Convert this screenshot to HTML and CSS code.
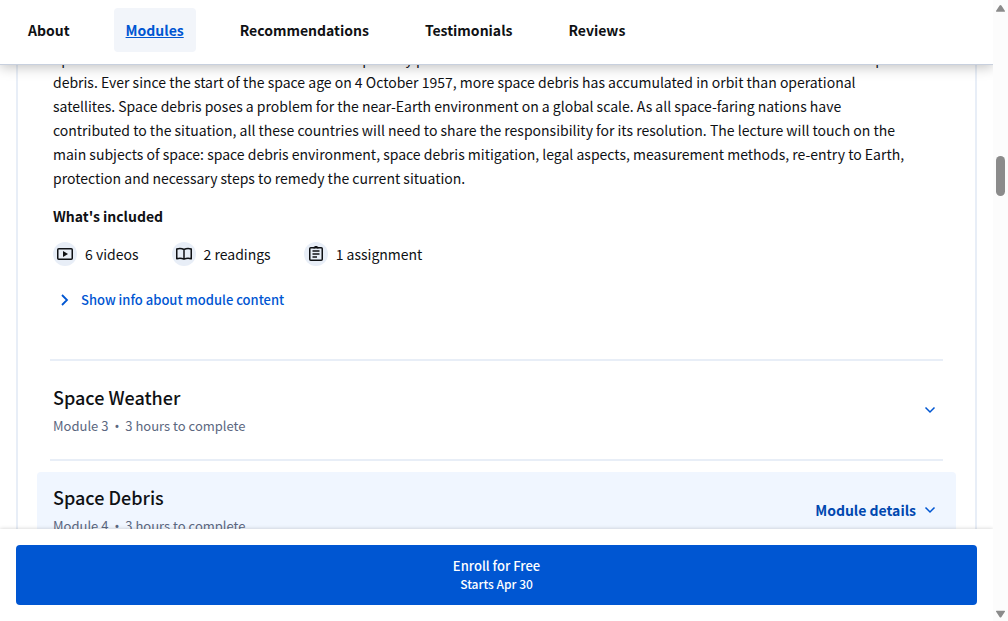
FILE: index.html
```html
<!DOCTYPE html>
<html lang="en">
<head>
<meta charset="utf-8">
<meta name="viewport" content="width=device-width, initial-scale=1">
<title>Space Debris – Modules</title>
<link rel="stylesheet" href="styles.css">
</head>
<body>
<div class="frame">
  <div class="page">
    <header class="topbar">
      <nav class="tabs" aria-label="Course sections">
        <a class="tab" href="#about">About</a>
        <a class="tab tab-active" href="#modules" aria-current="true">Modules</a>
        <a class="tab" href="#recommendations">Recommendations</a>
        <a class="tab" href="#testimonials">Testimonials</a>
        <a class="tab" href="#reviews">Reviews</a>
      </nav>
    </header>

    <main class="content" id="modules">
      <section class="card">
        <div class="module-body">
          <p class="summary">Space debris is a concern to all of the nations especially problems related to satellites and the future human use of near-Earth space debris. Ever since the start of the space age on 4 October 1957, more space debris has accumulated in orbit than operational satellites. Space debris poses a problem for the near-Earth environment on a global scale. As all space-faring nations have contributed to the situation, all these countries will need to share the responsibility for its resolution. The lecture will touch on the main subjects of space: space debris environment, space debris mitigation, legal aspects, measurement methods, re-entry to Earth, protection and necessary steps to remedy the current situation.</p>
          <h3 class="included-title">What's included</h3>
          <ul class="included">
            <li class="included-item">
              <span class="badge"><svg width="16" height="16" viewBox="0 0 16 16" aria-hidden="true"><rect x="0.75" y="2.75" width="14.5" height="10.5" rx="1" fill="none" stroke="currentColor" stroke-width="1.5"/><path d="M6 5v6l5-3z" fill="currentColor"/></svg></span>
              6 videos
            </li>
            <li class="included-item">
              <span class="badge"><svg width="16" height="16" viewBox="0 0 16 16" fill="none" stroke="currentColor" stroke-width="1.5" stroke-linejoin="round" aria-hidden="true"><path d="M8 3.5C6 2.400 3 2.200 0.750 3v9.800C3 12 6 12.200 8 13.200 10 12.200 13 12 15.250 12.800V3C13 2.200 10 2.400 8 3.500zM8 3.500v9.700"/></svg></span>
              2 readings
            </li>
            <li class="included-item">
              <span class="badge"><svg width="16" height="16" viewBox="0 0 16 16" fill="none" stroke="currentColor" stroke-width="1.500" aria-hidden="true"><rect x="1.750" y="1.750" width="12.500" height="12.500" rx="1"/><path d="M5.500 2L8 0.500l2.500 1.500M4.500 5h7M4.500 8h7M4.500 11h4.500"/></svg></span>
              1 assignment
            </li>
          </ul>
          <button class="show-info" type="button">
            <svg width="12" height="14" viewBox="0 0 12 14" fill="none" stroke="currentColor" stroke-width="1.800" aria-hidden="true"><path d="M3 2l5 5-5 5"/></svg>
            Show info about module content
          </button>
        </div>

        <hr class="divider">

        <div class="module">
          <div class="module-text">
            <h2 class="module-title">Space Weather</h2>
            <p class="module-meta"><span>Module 3</span><span class="dot">•</span><span>3 hours to complete</span></p>
          </div>
          <button class="toggle" type="button" aria-label="Show module details for Space Weather">
            <svg class="chevron" width="12" height="12" viewBox="0 0 12 12" fill="none" stroke="currentColor" stroke-width="1.500" aria-hidden="true"><path d="M1.500 3.500L6 8l4.500-4.500"/></svg>
          </button>
        </div>

        <hr class="divider">

        <div class="module module-hover">
          <div class="module-text">
            <h2 class="module-title">Space Debris</h2>
            <p class="module-meta"><span>Module 4</span><span class="dot">•</span><span>3 hours to complete</span></p>
          </div>
          <button class="toggle" type="button">
            Module details
            <svg class="chevron" width="12" height="12" viewBox="0 0 12 12" fill="none" stroke="currentColor" stroke-width="1.500" aria-hidden="true"><path d="M1.500 3.500L6 8l4.500-4.500"/></svg>
          </button>
        </div>
      </section>
    </main>

    <footer class="enroll-bar">
      <button class="enroll" type="button">
        <span class="enroll-title">Enroll for Free</span>
        <span class="enroll-date">Starts Apr 30</span>
      </button>
    </footer>
  </div>

  <div class="scrollbar" aria-hidden="true">
    <svg width="11" height="8" viewBox="0 0 11 8"><path d="M5.500 1Q6 1 6.400 1.600L10 7q.3.800-.6.800H1.600Q.7 7.800 1 7L4.600 1.600Q5 1 5.500 1z" fill="#8b8b8b"/></svg>
    <div class="track"><div class="thumb"></div></div>
    <svg width="11" height="8" viewBox="0 0 11 8"><path d="M5.500 7.500Q6 7.500 6.400 6.900L10 1.500Q10.300.7 9.400.7H1.600Q.7.7 1 1.500L4.600 6.900Q5 7.500 5.500 7.500z" fill="#8b8b8b"/></svg>
  </div>
</div>
</body>
</html>
```
FILE: styles.css
```css
* {
  box-sizing: border-box;
}

body,
h2,
h3,
p,
ul {
  margin: 0;
  padding: 0;
}

body,
button {
  font-family: "Noto Sans CJK SC", "Noto Sans", sans-serif;
  font-size: 14px;
  line-height: 24px;
  color: #0f1114;
}

button {
  border: 0;
  padding: 0;
  background: none;
  cursor: pointer;
}

svg {
  display: block;
  flex: none;
}

.frame {
  display: grid;
  grid-template-columns: 1fr 15px;
  height: 100vh;
  background: #fff;
}

.page {
  display: flex;
  flex-direction: column;
  min-width: 0;
  min-height: 0;
  overflow: hidden;
}

.topbar {
  position: relative;
  z-index: 1;
  padding: 8px 16px 12px;
  background: #fff;
  border-bottom: 1px solid #c8d0de;
  box-shadow: 0 2px 12px rgba(0, 0, 0, 0.25);
}

.tabs {
  display: flex;
  gap: 32px;
}

.tab {
  padding: 10px 12px;
  border-radius: 4px;
  color: #0f1114;
  font-weight: 700;
  text-decoration: none;
}

.tab-active {
  background: #f2f5fa;
  color: #0056d2;
  text-decoration: underline;
}

.content {
  flex: 1;
  min-height: 0;
  padding: 0 16px;
  overflow: hidden;
}

.card {
  padding: 0 19px;
  border: 2px solid #e8eef7;
  border-width: 0 2px;
}

/* The list is scrolled part-way through the module summary. */
.module-body {
  margin-top: -19px;
  padding: 0 16px 47px;
}

.summary {
  padding-right: 26px;
}

.included-title {
  margin: 14px 0;
  font-size: 14px;
  font-weight: 700;
}

.included {
  display: flex;
  gap: 33px;
  list-style: none;
}

.included-item {
  display: flex;
  align-items: center;
  gap: 8px;
}

.badge {
  display: grid;
  place-items: center;
  width: 24px;
  height: 24px;
  border-radius: 50%;
  background: #e8eef7;
}

.show-info {
  display: flex;
  align-items: center;
  gap: 10px;
  margin-top: 22px;
  padding-left: 6px;
  color: #0056d2;
  font-size: 13px;
  font-weight: 500;
}

.divider {
  height: 2px;
  margin: 0 13px;
  border: 0;
  background: #e8eef7;
}

.module {
  display: flex;
  align-items: center;
  justify-content: space-between;
  margin: 11px 0;
  padding: 12px 16px;
  border-radius: 4px;
}

.module-hover {
  background: #f0f6ff;
}

.module-text {
  display: grid;
  gap: 6px;
}

.module-title {
  font-size: 18px;
  font-weight: 500;
  line-height: 26px;
}

.module-meta {
  display: flex;
  gap: 6px;
  color: #5b6780;
  font-size: 13px;
  line-height: 20px;
}

.dot {
  font-family: "Noto Sans", sans-serif;
  font-size: 13px;
}

.toggle {
  display: flex;
  align-items: center;
  gap: 8px;
  padding-right: 4px;
  color: #0048b0;
  font-weight: 700;
}

.chevron {
  color: #0056d2;
}

.enroll-bar {
  padding: 16px;
  background: #fff;
  box-shadow: 0 0 4px rgba(0, 0, 0, 0.2);
  z-index: 1;
}

.enroll {
  display: grid;
  align-content: center;
  width: 100%;
  height: 60px;
  border-radius: 4px;
  background: #0056d2;
}

.enroll-title,
.enroll-date {
  color: #fff;
  font-size: 13px;
  font-weight: 500;
  line-height: 18px;
}

.enroll-date {
  font-size: 12px;
}

.scrollbar {
  display: flex;
  flex-direction: column;
  align-items: center;
  padding: 4px 0 3px;
  background: #fcfcfc;
}

.track {
  flex: 1;
  padding-top: 144px;
}

.thumb {
  width: 9px;
  height: 40px;
  border-radius: 5px;
  background: #8b8b8b;
}
```
